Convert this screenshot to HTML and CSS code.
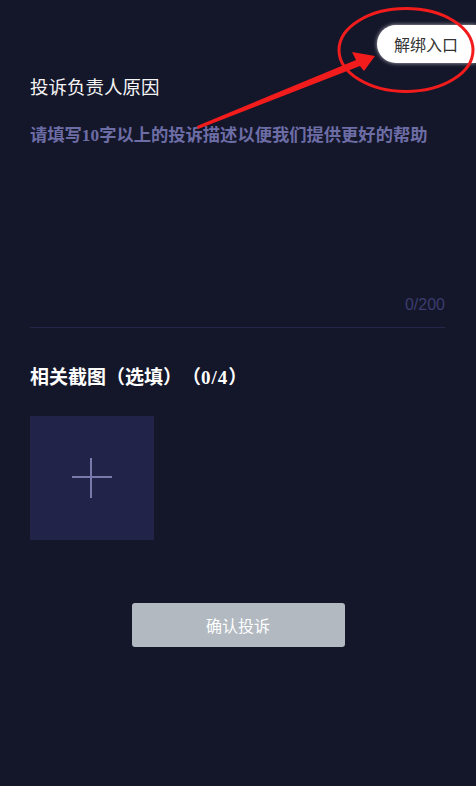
FILE: index.html
```html
<!DOCTYPE html>
<html lang="zh-CN">
<head>
<meta charset="utf-8">
<title>投诉负责人</title>
<link rel="stylesheet" href="styles.css">
</head>
<body>
<div class="page">
  <h2 class="reason-title">投诉负责人原因</h2>
  <div class="field">
    <div class="placeholder">请填写10字以上的投诉描述以便我们提供更好的帮助</div>
    <div class="counter">0/200</div>
  </div>
  <h3 class="shot-title">相关截图（选填）（<span class="num">0/4</span>）</h3>
  <div class="upload">
    <svg class="plus" width="40" height="40" viewBox="0 0 40 40"><path d="M19 0V40M0 19H40" stroke="#7b79ab" stroke-width="2"/></svg>
  </div>
  <div class="actions">
    <button class="submit">确认投诉</button>
  </div>
</div>
<div class="unbind">解绑入口</div>
<svg class="annot" width="476" height="140" viewBox="0 0 476 140">
  <ellipse cx="406" cy="50" rx="67" ry="41.5" fill="none" stroke="#f21c1c" stroke-width="3"/>
  <polygon points="197,126 356,60 352,52 375,56 364,71 360,66 198,129" fill="#f21c1c"/>
</svg>
</body>
</html>
```
FILE: styles.css
```css
html, body {
  margin: 0;
  padding: 0;
  background: #14162a;
  height: 100%;
}
body {
  position: relative;
  font-family: "Noto Sans CJK SC", sans-serif;
  color: #f2f2f2;
  overflow: hidden;
  text-spacing-trim: space-all;
  font-feature-settings: "chws" 0, "halt" 0;
}
.page {
  padding: 0 31px 0 30px;
}
.reason-title {
  margin: 73px 0 0;
  font-size: 18.5px;
  line-height: 26px;
  font-weight: 400;
  color: #f4f4f4;
}
.field {
  margin-top: 24px;
  border-bottom: 1px solid #24274a;
  padding-bottom: 12px;
}
.placeholder {
  height: 172px;
  font-family: "Liberation Serif", "Noto Sans CJK SC", serif;
  font-weight: 700;
  font-size: 17.3px;
  line-height: 26px;
  color: #6d6da6;
}
.counter {
  text-align: right;
  font-family: "Liberation Sans", sans-serif;
  font-size: 16px;
  line-height: 20px;
  color: #3b3d6e;
}
.shot-title {
  margin: 36px 0 0;
  font-family: "Liberation Serif", "Noto Sans CJK SC", serif;
  font-weight: 700;
  font-size: 19px;
  line-height: 27px;
  color: #ffffff;
}
.num {
  letter-spacing: 1px;
}
.upload {
  margin-top: 25px;
  width: 124px;
  height: 124px;
  background: #212348;
  display: flex;
  align-items: center;
  justify-content: center;
}
.actions {
  margin-top: 63px;
  display: flex;
  justify-content: center;
  padding-left: 1px;
}
.submit {
  width: 213px;
  height: 44px;
  border: none;
  border-radius: 3px;
  background: #b2b9c1;
  color: #ffffff;
  font-family: "Noto Sans CJK SC", sans-serif;
  font-size: 16px;
  padding: 0;
}
.unbind {
  position: absolute;
  top: 25px;
  right: 0;
  width: 82px;
  height: 38px;
  padding-left: 17px;
  border-radius: 19px 0 0 19px;
  background: #ffffff;
  box-shadow: 0 0 4px rgba(255, 255, 255, 0.7);
  color: #333333;
  font-size: 16px;
  line-height: 38px;
}
.annot {
  position: absolute;
  top: 0;
  left: 0;
  pointer-events: none;
}
```
